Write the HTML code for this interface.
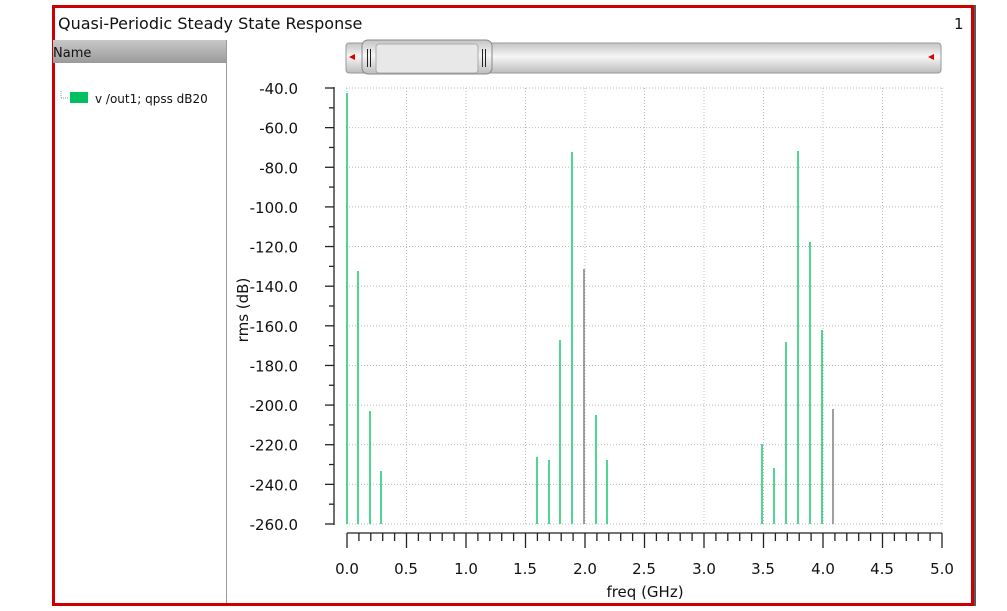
<!DOCTYPE html>
<html><head><meta charset="utf-8"><style>
body{margin:0;width:1007px;height:611px;background:#fff;overflow:hidden;font-family:"DejaVu Sans","Liberation Sans",sans-serif;}
svg{position:absolute;left:0;top:0}
</style></head><body>
<svg width="1007" height="611" viewBox="0 0 1007 611" xmlns="http://www.w3.org/2000/svg">
<defs>
<linearGradient id="hd" x1="0" y1="0" x2="0" y2="1"><stop offset="0" stop-color="#c8c8c8"/><stop offset="1" stop-color="#9a9a9a"/></linearGradient>
<linearGradient id="sb" x1="0" y1="0" x2="0" y2="1"><stop offset="0" stop-color="#c4c4c4"/><stop offset="0.45" stop-color="#f6f6f6"/><stop offset="1" stop-color="#bcbcbc"/></linearGradient>
</defs>
<rect x="53.5" y="6.5" width="919" height="598" fill="none" stroke="#cc0000" stroke-width="3"/>
<line x1="975" y1="5" x2="975" y2="606" stroke="#222" stroke-width="1.5"/>
<text x="58" y="29" font-size="16" fill="#111">Quasi-Periodic Steady State Response</text>
<text x="954" y="29" font-size="15" fill="#111">1</text>
<rect x="53" y="40" width="173" height="23" fill="url(#hd)"/>
<text x="53" y="57" font-size="13" fill="#111">Name</text>
<line x1="226.5" y1="40" x2="226.5" y2="603" stroke="#999"/>
<line x1="61" y1="91" x2="61" y2="98" stroke="#999" stroke-dasharray="1 1"/>
<line x1="61" y1="98" x2="68" y2="98" stroke="#999" stroke-dasharray="1 1"/>
<rect x="70" y="92" width="18" height="11" fill="#00c060"/>
<text x="95" y="103" font-size="12" fill="#111">v /out1; qpss dB20</text>
<rect x="346" y="43" width="595" height="30" rx="3" fill="url(#sb)" stroke="#999"/>
<polygon points="349,57 355,54 355,60" fill="#d00"/>
<polygon points="934,54 934,60 928,57" fill="#d00"/>
<rect x="362" y="40" width="130" height="34" rx="6" fill="url(#sb)" stroke="#888"/>
<rect x="376" y="44" width="102" height="29" rx="3" fill="#e8e8e8" stroke="#aaa"/>
<line x1="367.5" y1="49" x2="367.5" y2="67" stroke="#222"/><line x1="370.5" y1="49" x2="370.5" y2="67" stroke="#222"/>
<line x1="482.5" y1="49" x2="482.5" y2="67" stroke="#222"/><line x1="485.5" y1="49" x2="485.5" y2="67" stroke="#222"/>
<g id="grid" stroke="#bbb" stroke-dasharray="1 2" stroke-width="1"></g>
<g id="ax" stroke="#222" stroke-width="1.3"></g>
<g id="bars" stroke-width="1.6"></g>
<g font-size="15" fill="#111" text-anchor="end" id="ylab">
<text x="298" y="94">-40.0</text><text x="298" y="134">-60.0</text><text x="298" y="173">-80.0</text>
<text x="298" y="213">-100.0</text><text x="298" y="253">-120.0</text><text x="298" y="292">-140.0</text>
<text x="298" y="332">-160.0</text><text x="298" y="371">-180.0</text><text x="298" y="411">-200.0</text>
<text x="298" y="451">-220.0</text><text x="298" y="490">-240.0</text><text x="298" y="530">-260.0</text>
</g>
<text transform="translate(248,310) rotate(-90)" font-size="15" fill="#111" text-anchor="middle">rms (dB)</text>
<g font-size="15" fill="#111" text-anchor="middle">
<text x="347" y="574">0.0</text><text x="406" y="574">0.5</text><text x="466" y="574">1.0</text>
<text x="525" y="574">1.5</text><text x="585" y="574">2.0</text><text x="644" y="574">2.5</text>
<text x="704" y="574">3.0</text><text x="763" y="574">3.5</text><text x="823" y="574">4.0</text>
<text x="882" y="574">4.5</text><text x="942" y="574">5.0</text>
</g>
<text x="645" y="597" font-size="15" fill="#111" text-anchor="middle">freq (GHz)</text>
</svg>
<script>
var NS="http://www.w3.org/2000/svg";
function L(g,x1,y1,x2,y2,c){var e=document.createElementNS(NS,"line");e.setAttribute("x1",x1);e.setAttribute("y1",y1);e.setAttribute("x2",x2);e.setAttribute("y2",y2);if(c)e.setAttribute("stroke",c);document.getElementById(g).appendChild(e);}
var S=436/11;
document.querySelectorAll("#ylab text").forEach(function(t,i){t.setAttribute("y",(88+i*S+6).toFixed(1));});
for(var i=0;i<=11;i++){var y=88+i*S;L("grid",346,y,942,y);L("ax",325,y,334,y);if(i<11)L("ax",329,y+S/2,334,y+S/2);}
L("ax",334,87,334,525);
for(var i=0;i<=10;i++){var x=347+i*59.5;L("grid",x,88,x,524);}
L("ax",347,533,942,533);
for(var i=0;i<=50;i++){var x=347+i*11.9;var len=(i%5==0)?15:8;L("ax",x,533,x,533+len);}
var bars=[[347,93],[358,271],[370,411],[381,471],[537,457],[549,460],[560,340],[572,152],[584,269,"#888"],[596,415],[607,460],[762,444],[774,468],[786,342],[798,151],[810,242],[822,330],[833,409,"#888"]];
bars.forEach(function(b){L("bars",b[0],b[1],b[0],524,b[2]||"#22cc77");});
</script>
</body></html>
